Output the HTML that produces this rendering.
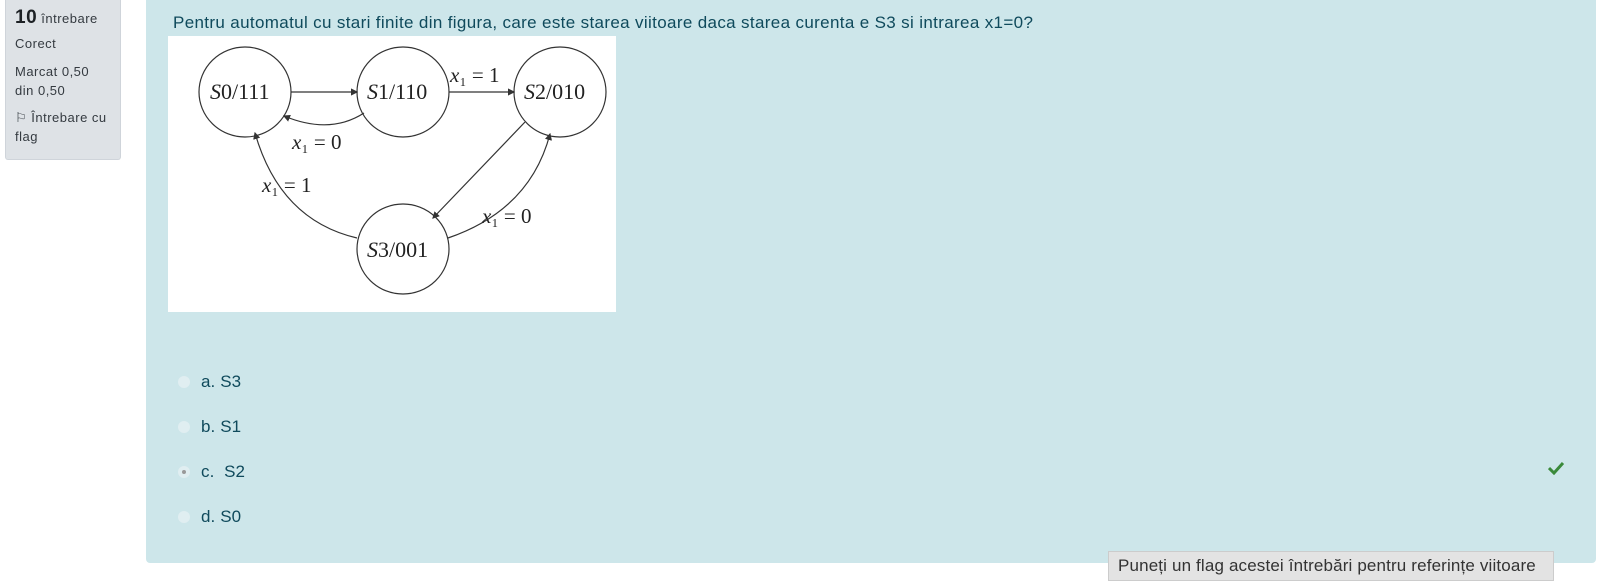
<!DOCTYPE html>
<html><head><meta charset="utf-8"><style>
body{margin:0;width:1600px;height:576px;background:#fff;font-family:"Liberation Sans",sans-serif;position:relative;overflow:hidden;color:#1d2125}
.info{position:absolute;left:5px;top:0;width:116px;height:160px;background:#dee2e6;border:1px solid #cfd4da;border-top:none;border-radius:0 0 3px 3px;box-sizing:border-box;padding:8px 9px;font-size:13px;line-height:19px;color:#343a40;letter-spacing:0.5px}
.panel{position:absolute;left:146px;top:0;width:1450px;height:563px;background:#cde6ea;border-radius:0 0 4px 4px}
.q{position:absolute;left:173px;top:13px;font-size:17px;letter-spacing:0.35px;color:#0f4a5c}
.img{position:absolute;left:168px;top:36px;width:448px;height:276px;background:#fff}
.opt{position:absolute;left:201px;font-size:17px;letter-spacing:0.1px;color:#0f4a5c}
.rad{position:absolute;left:178px;width:12px;height:12px;border-radius:50%;background:#e0eef1}
.flag{position:absolute;left:1108px;top:551px;width:446px;height:30px;background:#e3e3e3;border:1px solid #ccc;box-sizing:border-box;font-size:17px;letter-spacing:0.15px;color:#333;padding:4px 9px;white-space:nowrap}
</style></head><body>
<div class="info"><div><b style="font-size:19px;color:#1d2125">10</b> întrebare</div><div style="margin-top:6px">Corect</div><div style="margin-top:9px">Marcat 0,50<br>din 0,50</div><div style="margin-top:8px">⚐ Întrebare cu<br>flag</div></div>
<div class="panel"></div>
<div class="q">Pentru automatul cu stari finite din figura, care este starea viitoare daca starea curenta e S3 si intrarea x1=0?</div>
<div class="img"></div>
<svg style="position:absolute;left:0;top:0" width="1600" height="576" font-family="Liberation Serif,serif" font-size="22">
<defs><marker id="a" markerWidth="6" markerHeight="6" refX="5" refY="3" orient="auto"><path d="M0 0L6 3L0 6z" fill="#333"/></marker></defs>
<g fill="none" stroke="#333" stroke-width="1.2">
<ellipse cx="245" cy="92" rx="46" ry="45"/><ellipse cx="403" cy="92" rx="46" ry="45"/><ellipse cx="560" cy="92" rx="46" ry="45"/><ellipse cx="403" cy="249" rx="46" ry="45"/>
<path d="M291 92H357" marker-end="url(#a)"/><path d="M449 92H514" marker-end="url(#a)"/>
<path d="M364 113Q330 135 284 116" marker-end="url(#a)"/>
<path d="M357 238Q280 220 255 133" marker-end="url(#a)"/>
<path d="M525 122L433 218" marker-end="url(#a)"/>
<path d="M448 238Q530 210 550 134" marker-end="url(#a)"/>
</g>
<g fill="#222">
<text x="210" y="99"><tspan font-style="italic">S</tspan>0/111</text><text x="367" y="99"><tspan font-style="italic">S</tspan>1/110</text><text x="524" y="99"><tspan font-style="italic">S</tspan>2/010</text><text x="367" y="257"><tspan font-style="italic">S</tspan>3/001</text>
<text x="450" y="82" font-size="21"><tspan font-style="italic">x</tspan>₁ = 1</text><text x="292" y="149" font-size="21"><tspan font-style="italic">x</tspan>₁ = 0</text><text x="262" y="192" font-size="21"><tspan font-style="italic">x</tspan>₁ = 1</text><text x="482" y="223" font-size="21"><tspan font-style="italic">x</tspan>₁ = 0</text>
</g></svg>
<div class="rad" style="top:376px"></div><div class="opt" style="top:372px">a. S3</div>
<div class="rad" style="top:421px"></div><div class="opt" style="top:417px">b. S1</div>
<div class="rad" style="top:466px"><div style="width:4px;height:4px;background:#999;border-radius:50%;margin:4px"></div></div><div class="opt" style="top:462px">c.&nbsp; S2</div>
<div class="rad" style="top:511px"></div><div class="opt" style="top:507px">d. S0</div>
<svg style="position:absolute;left:1548px;top:461px" width="16" height="14"><path d="M1 7L6 12L15 2" stroke="#3a8a3a" stroke-width="3" fill="none"/></svg>
<div class="flag">Puneți un flag acestei întrebări pentru referințe viitoare</div>
</body></html>
